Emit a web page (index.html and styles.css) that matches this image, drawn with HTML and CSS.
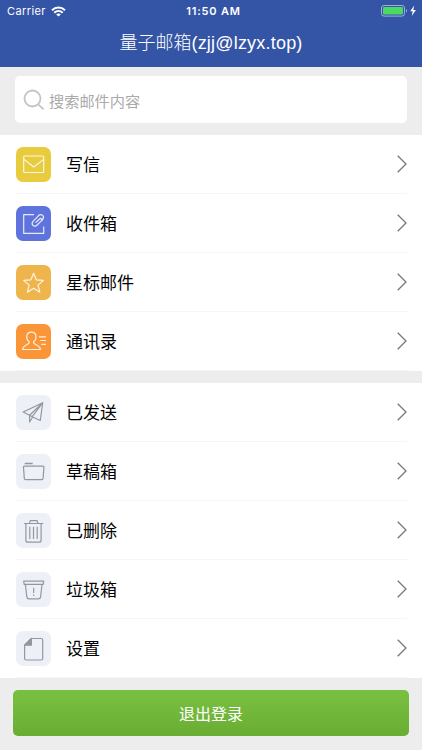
FILE: index.html
```html
<!DOCTYPE html>
<html lang="zh-CN">
<head>
    <meta charset="UTF-8">
    <meta name="viewport" content="width=device-width, initial-scale=1.0">
    <title>量子邮箱</title>
    <link rel="stylesheet" href="styles.css">
</head>
<body>
    <header>
        <div class="status-bar">
            <div class="carrier">
                <span>Carrier</span>
                <svg width="15" height="11" viewBox="0 0 15 11" fill="none" stroke="#fff" stroke-width="2">
                    <path d="M1 4.2C4.7.7 10.3.7 14 4.2M3.3 6.7c2.4-2.2 6-2.2 8.4 0"/>
                    <path d="M7.5 10.6L5.2 8.4c1.3-1.2 3.3-1.2 4.6 0z" fill="#fff" stroke="none"/>
                </svg>
            </div>
            <span class="time">11:50 AM</span>
            <svg class="battery" width="37" height="12" viewBox="0 0 37 12">
                <rect x=".5" y=".5" width="23" height="10.6" rx="2.5" fill="none" stroke="#a3b0d8"/>
                <rect x="2" y="2" width="20" height="7.6" rx="1.3" fill="#4cd964"/>
                <path d="M25 4c1.3.5 1.3 3.1 0 3.6z" fill="#a3b0d8"/>
                <path d="M33.2.6L29.2 6.3h2.5l-1 4.6 4.2-5.9h-2.6z" fill="#fff"/>
            </svg>
        </div>
        <h1>量子邮箱<span class="address">(zjj@lzyx.top)</span></h1>
    </header>

    <div class="search">
        <svg width="22" height="22" viewBox="0 0 22 22" fill="none" stroke="#c4c4c4" stroke-width="1.8">
            <circle cx="9.5" cy="9.5" r="8"/>
            <path d="M15.2 15.3l5.4 5"/>
        </svg>
        <span>搜索邮件内容</span>
    </div>

    <nav class="menu">
        <a class="item">
            <svg class="icon yellow" viewBox="0 0 35 35">
                <rect x="7.7" y="9" width="20" height="16.5" rx="1"/>
                <path d="M8 12.4l9.8 7.6 9.8-7.6"/>
            </svg>
            <span>写信</span>
            <svg class="arrow" viewBox="0 0 10 18"><path d="M.7.8L9 9 .7 17.2"/></svg>
        </a>
        <a class="item">
            <svg class="icon blue" viewBox="0 0 35 35">
                <path d="M18 8.6H7.7v18.8h20V20.5"/>
                <path d="M19.6 16.6l4-3.6c1.5-1.3 3.1.5 1.7 1.9l-4.4 4.3c-2.9 2.6-6.4-1-3.8-3.9l5.3-5.5c3-2.9 6.8.6 4.2 3.7l-1.3 1.6"/>
            </svg>
            <span>收件箱</span>
            <svg class="arrow" viewBox="0 0 10 18"><path d="M.7.8L9 9 .7 17.2"/></svg>
        </a>
        <a class="item">
            <svg class="icon gold" viewBox="0 0 35 35">
                <path d="M17.6 8.2l2.7 6.6 7.2.6-5.5 4.7 1.8 7.1-6.2-3.9-6.2 3.9 1.8-7.1-5.5-4.7 7.2-.6z"/>
            </svg>
            <span>星标邮件</span>
            <svg class="arrow" viewBox="0 0 10 18"><path d="M.7.8L9 9 .7 17.2"/></svg>
        </a>
        <a class="item">
            <svg class="icon orange" viewBox="0 0 35 35">
                <path d="M13.4 18c-4.2-3.4-3.2-9.8 2-9.8s6.2 6.4 2 9.8c-.5 3 6.8 2.7 7 7.5H6.6c.2-4.8 7.3-4.5 6.8-7.5z"/>
                <path d="M23 12.8h7M24.3 16.5H30M25.3 20.3H30"/>
            </svg>
            <span>通讯录</span>
            <svg class="arrow" viewBox="0 0 10 18"><path d="M.7.8L9 9 .7 17.2"/></svg>
        </a>
    </nav>

    <nav class="menu">
        <a class="item">
            <svg class="icon" viewBox="0 0 35 35">
                <path d="M26.7 7.7L7.2 17l6.4 3.3zM26.7 7.7L24.3 25.5l-8.1-3.8zM13.6 20.3V27l3-4.8M13.6 20.3l2.6 1.4"/>
            </svg>
            <span>已发送</span>
            <svg class="arrow" viewBox="0 0 10 18"><path d="M.7.8L9 9 .7 17.2"/></svg>
        </a>
        <a class="item">
            <svg class="icon" viewBox="0 0 35 35">
                <path d="M8.7 9.5h8" stroke-width="1.5"/>
                <path d="M8.6 12.2h18.2q1.2 0 1.1 1.2l-.8 11q-.1 1.2-1.3 1.2H9.6q-1.2 0-1.3-1.2l-.8-11q-.1-1.2 1.1-1.2z"/>
            </svg>
            <span>草稿箱</span>
            <svg class="arrow" viewBox="0 0 10 18"><path d="M.7.8L9 9 .7 17.2"/></svg>
        </a>
        <a class="item">
            <svg class="icon" viewBox="0 0 35 35">
                <path d="M8 10.5h19.3M13.6 10.2l.6-2.5h7l.6 2.5M9.9 10.7v16.5q0 2 2 2h11.2q2 0 2-2V10.7M13.8 13.7v12.2M17.5 13.7v12.2M21.2 13.7v12.2"/>
            </svg>
            <span>已删除</span>
            <svg class="arrow" viewBox="0 0 10 18"><path d="M.7.8L9 9 .7 17.2"/></svg>
        </a>
        <a class="item">
            <svg class="icon" viewBox="0 0 35 35">
                <path d="M7.7 9.2h20l-.5 3.2h-19zM9.4 12.5l1.4 12.3q.3 2 2.2 2h9.4q1.9 0 2.2-2L26 12.5M17.7 15.7v5.2M17.7 22.4v1.6"/>
            </svg>
            <span>垃圾箱</span>
            <svg class="arrow" viewBox="0 0 10 18"><path d="M.7.8L9 9 .7 17.2"/></svg>
        </a>
        <a class="item">
            <svg class="icon" viewBox="0 0 35 35">
                <path d="M15.4 7.5h9.8q1.5 0 1.5 1.5v18.5q0 1.5-1.5 1.5H10.1q-1.5 0-1.5-1.5V14.2z"/>
                <path d="M15.4 7.5v6.7H8.6z" fill="#9298a2"/>
            </svg>
            <span>设置</span>
            <svg class="arrow" viewBox="0 0 10 18"><path d="M.7.8L9 9 .7 17.2"/></svg>
        </a>
    </nav>

    <button class="logout">退出登录</button>
</body>
</html>
```

FILE: styles.css
```css
* {
    box-sizing: border-box;
}
body {
    font-family: "Liberation Sans", "Noto Sans CJK SC", sans-serif;
    margin: 0;
    background-color: #ededed;
    color: #000;
}
header {
    height: 67px;
    background-color: #3455a6;
    color: #fff;
}
.status-bar {
    display: grid;
    grid-template-columns: 1fr auto 1fr;
    align-items: center;
    height: 22px;
    padding: 0 4px 0 7px;
    font-family: Inter, sans-serif;
    font-size: 11px;
}
.carrier {
    display: flex;
    align-items: center;
    gap: 5px;
    letter-spacing: 0.4px;
}
.time {
    padding-left: 2px;
    font-weight: 600;
    letter-spacing: 0.8px;
}
.battery {
    justify-self: end;
}
h1 {
    margin: 0;
    font-size: 18px;
    font-weight: 300;
    line-height: 43px;
    text-align: center;
}
.address {
    letter-spacing: 0.2px;
}
.search {
    display: flex;
    align-items: center;
    gap: 4px;
    height: 47px;
    margin: 9px 15px 12px;
    padding-left: 8px;
    background-color: #fff;
    border-radius: 5px;
    font-size: 15.2px;
    color: #aaa;
}
.menu {
    margin-bottom: 12px;
    background-color: #fff;
}
.item {
    display: flex;
    align-items: center;
    height: 59px;
    margin: 0 15px 0 16px;
    border-bottom: 1px solid #f5f5f5;
    font-size: 17px;
}
.item span {
    flex: 1;
    padding-bottom: 2px;
}
.icon {
    width: 35px;
    height: 35px;
    margin: 1px 15px 0 0;
    border-radius: 7px;
    background-color: #edf0f6;
    fill: none;
    stroke: #9298a2;
    stroke-width: 1.2;
    stroke-linejoin: round;
}
.yellow,
.blue,
.gold,
.orange {
    stroke: #fff;
    stroke-opacity: 0.85;
}
.yellow {
    background-color: #e9cb3e;
}
.blue {
    background-color: #5e73dc;
}
.gold {
    background-color: #f0b44c;
}
.orange {
    background-color: #fa9638;
}
.arrow {
    width: 10px;
    height: 18px;
    margin-bottom: 1px;
    fill: none;
    stroke: #777;
    stroke-width: 1.3;
}
.logout {
    display: block;
    width: 396px;
    height: 46px;
    margin: 0 13px;
    border: none;
    border-radius: 5px;
    background: linear-gradient(#7ac040, #69ae34);
    color: #fff;
    font-family: inherit;
    font-size: 16px;
}
```
